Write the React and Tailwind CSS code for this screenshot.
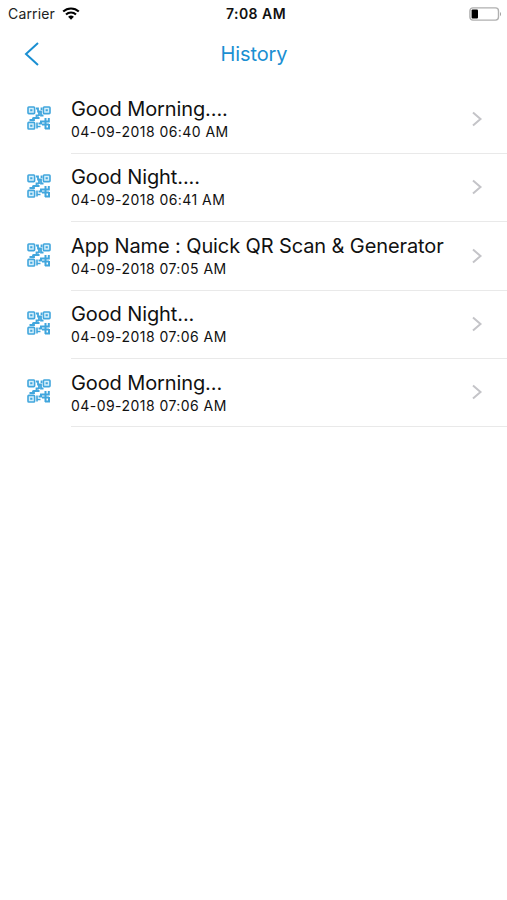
const history = [
  { id: 1, title: "Good Morning....", date: "04-09-2018 06:40 AM" },
  { id: 2, title: "Good Night....", date: "04-09-2018 06:41 AM" },
  { id: 3, title: "App Name : Quick QR Scan & Generator", date: "04-09-2018 07:05 AM" },
  { id: 4, title: "Good Night...", date: "04-09-2018 07:06 AM" },
  { id: 5, title: "Good Morning...", date: "04-09-2018 07:06 AM" },
];

const WifiIcon = () => (
  <svg width="18" height="14" viewBox="0 0 18 14" fill="none" stroke="#000" strokeWidth="2.1">
    <path d="M1.2 4.6a11.2 11.2 0 0 1 15.6 0" />
    <path d="M4 7.5a7.2 7.2 0 0 1 10 0" />
    <path d="M9 12.8 6.1 9.8a4.2 4.2 0 0 1 5.8 0z" fill="#000" stroke="none" />
  </svg>
);

const BatteryIcon = () => (
  <svg width="33" height="14" viewBox="0 0 33 14" fill="none">
    <rect x="0.9" y="0.9" width="28.6" height="12.2" rx="3" stroke="#b0b0b0" strokeWidth="1.4" />
    <rect x="2.6" y="2.4" width="6.4" height="9.2" rx="1" fill="#000" />
    <path d="M31 5v4.2c1.3-.6 1.3-3.6 0-4.2z" fill="#999" />
  </svg>
);

const QrIcon = () => (
  <svg width="24" height="24" viewBox="0 0 24 24" fill="none" stroke="#41a6dd" strokeWidth="1.6">
    {/* Finder squares */}
    <g fill="#d5effb">
      <rect x="1" y="1" width="6.6" height="6.6" rx="0.8" />
      <rect x="16.4" y="1" width="6.6" height="6.6" rx="0.8" />
      <rect x="1" y="16.4" width="6.6" height="6.6" rx="0.8" />
    </g>
    <path d="M3.2 4.3h2.2M18.6 4.3h2.2M3.2 19.7h2.2" strokeWidth="2" />
    {/* Data modules */}
    <path d="M9 2.5h2v3h3v4h2.5M14.5 1.5v2.5M12 6v4" strokeWidth="1.8" />
    <path d="M12 9.5H9.5v2.5H7v2H2.5M6 11.5v2M10 12h2.5" strokeWidth="1.8" />
    <path d="M10 16.5v6M10 20.5h3.5" />
    <path d="M18.5 12v11M21.8 12v3.5h-4M22 18v4.5h-4M11.5 17.5h2.5v-2h4M15 18.5h7" strokeWidth="2" />
  </svg>
);

const HistoryRow = ({ item }) => (
  <li className="flex h-[68.4px] pl-[27px]">
    <div className="w-11 shrink-0 pt-[20.5px]">
      <QrIcon />
    </div>
    <div className="flex flex-1 items-start justify-between border-b border-[#e9e9e9] pr-6">
      <div className="pt-[10.7px] text-[#111] whitespace-nowrap">
        <p className="text-[20px] leading-[26px] tracking-[-0.11px]">{item.title}</p>
        <p className="text-[14px] leading-5 tracking-[0.45px]">{item.date}</p>
      </div>
      <svg className="mt-[25.5px]" width="12" height="16" viewBox="0 0 12 16" fill="none" stroke="#c4c4c8" strokeWidth="2">
        <path d="m2 1.5 7.5 6.5L2 14.5" />
      </svg>
    </div>
  </li>
);

const App = () => {
  return (
    <div className="h-[900px] w-[507px] overflow-hidden bg-white font-['Inter','Liberation_Sans',sans-serif]">
      <div className="grid h-[27px] grid-cols-3 items-center px-2">
        <div className="flex items-center gap-[7px] text-[14px] tracking-[0.15px] text-[#222]">
          Carrier
          <WifiIcon />
        </div>
        <p className="pl-[5px] text-center text-[14px] font-semibold tracking-[0.45px] text-[#111]">7:08 AM</p>
        <div className="flex justify-end -mr-[3px]">
          <BatteryIcon />
        </div>
      </div>

      <header className="grid h-[58.4px] grid-cols-3 items-start px-6">
        <button aria-label="Back" className="pt-[14px]">
          <svg width="16" height="26" viewBox="0 0 16 26" fill="none" stroke="#1a8fd2" strokeWidth="2">
            <path d="M14 2 2 13l12 11" />
          </svg>
        </button>
        <h1 className="pt-[13px] pl-px text-center text-[20px] leading-7 tracking-[-0.1px] text-[#1a8fd2]">History</h1>
      </header>

      <ul>
        {history.map((item) => (
          <HistoryRow key={item.id} item={item} />
        ))}
      </ul>
    </div>
  );
};

export default App;
